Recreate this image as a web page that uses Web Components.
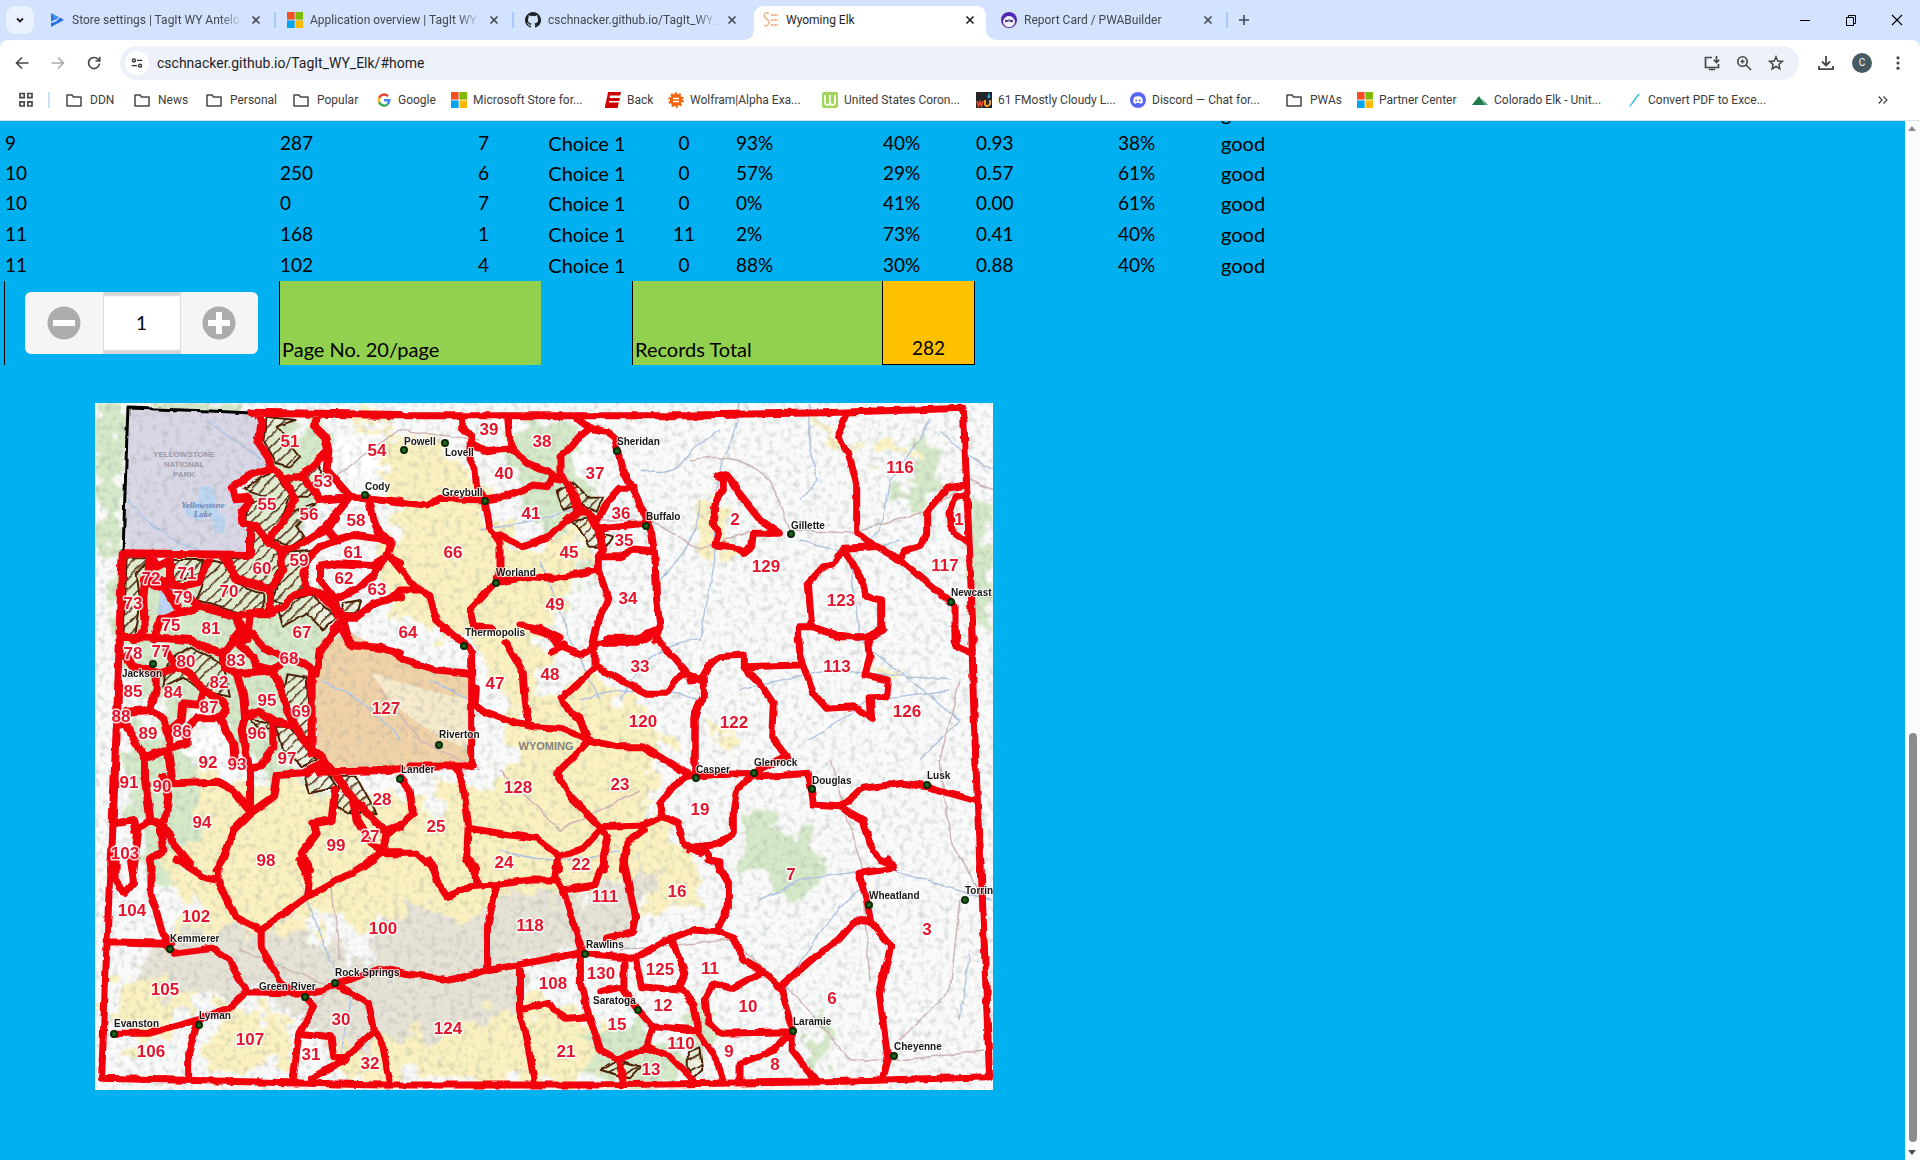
<!DOCTYPE html>
<html lang="en">
<head>
<meta charset="utf-8">
<title>Wyoming Elk</title>
<style>
  html, body { margin: 0; height: 100%; }
  body { font-family: Roboto, "Open Sans", sans-serif; font-size: 12px; color: #1f1f1f; background: #fff; overflow: hidden; }
</style>
</head>
<body>
<browser-window>
  <tab-strip slot="tabs">
    <browser-tab icon="play">Store settings | TagIt WY Antelo</browser-tab>
    <browser-tab icon="windows">Application overview | TagIt WY</browser-tab>
    <browser-tab icon="github" quiet>cschnacker.github.io/TagIt_WY_</browser-tab>
    <browser-tab icon="elk" active quiet>Wyoming Elk</browser-tab>
    <browser-tab icon="pwa">Report Card / PWABuilder</browser-tab>
  </tab-strip>
  <address-bar slot="address" value="cschnacker.github.io/TagIt_WY_Elk/#home"></address-bar>
  <bookmarks-bar slot="bookmarks">
    <bookmark-item icon="folder" style="--w:68px">DDN</bookmark-item>
    <bookmark-item icon="folder" style="--w:72px">News</bookmark-item>
    <bookmark-item icon="folder" style="--w:87px">Personal</bookmark-item>
    <bookmark-item icon="folder" style="--w:83px">Popular</bookmark-item>
    <bookmark-item icon="google" style="--w:75px">Google</bookmark-item>
    <bookmark-item icon="windows" style="--w:154px">Microsoft Store for...</bookmark-item>
    <bookmark-item icon="espn" style="--w:63px">Back</bookmark-item>
    <bookmark-item icon="wolfram" style="--w:154px">Wolfram|Alpha Exa...</bookmark-item>
    <bookmark-item icon="worldo" style="--w:154px">United States Coron...</bookmark-item>
    <bookmark-item icon="wu" style="--w:154px">61 FMostly Cloudy L...</bookmark-item>
    <bookmark-item icon="discord" style="--w:156px">Discord — Chat for...</bookmark-item>
    <bookmark-item icon="folder" style="--w:71px">PWAs</bookmark-item>
    <bookmark-item icon="windows" style="--w:115px">Partner Center</bookmark-item>
    <bookmark-item icon="peak" style="--w:154px">Colorado Elk - Unit...</bookmark-item>
    <bookmark-item icon="slash" style="--w:154px">Convert PDF to Exce...</bookmark-item>
  </bookmarks-bar>
  <elk-page>
    <draw-table></draw-table>
    <unit-map></unit-map>
  </elk-page>
</browser-window>

<script>
const ICONS = {
  play: '<path d="M2 1l4 6-4 3zM2 15l13-7-4-2.600-4 4.200L2 11z" fill="#2b6fe0"/><path d="M2 1l8 4.200-4 3.300z" fill="#3f8cf3"/>',
  windows: '<path fill="#f25022" d="M0 0h7.600v7.600H0z"/><path fill="#7fba00" d="M8.400 0H16v7.600H8.400z"/><path fill="#00a4ef" d="M0 8.400h7.600V16H0z"/><path fill="#ffb900" d="M8.400 8.400H16V16H8.400z"/>',
  github: '<path fill="#1f2328" fill-rule="evenodd" d="M8 0a8 8 0 0 0-2.530 15.590c.4.070.55-.17.55-.38v-1.490c-2.010.37-2.530-.49-2.690-.94-.09-.23-.48-.94-.82-1.130-.28-.15-.68-.52-.01-.53.63-.01 1.080.58 1.230.82.72 1.210 1.870.87 2.330.66.07-.52.28-.87.51-1.070-1.780-.2-3.640-.89-3.640-3.950 0-.87.310-1.590.82-2.150-.08-.2-.36-1.020.08-2.120 0 0 .67-.21 2.200.82a7.600 7.600 0 0 1 4 0c1.530-1.040 2.200-.82 2.200-.82.44 1.100.16 1.920.08 2.120.51.56.82 1.270.82 2.150 0 3.070-1.870 3.750-3.650 3.950.29.25.54.73.54 1.480v2.200c0 .21.150.46.55.38A8 8 0 0 0 8 0z"/>',
  elk: '<path d="M6 2C4 0 1 1 1 4s5 3 5 6-3 5-5 3" fill="none" stroke="#f4b58c" stroke-width="1.600"/><path d="M8 3h7M8 8h7M8 13h7" stroke="#f4b58c" stroke-width="2" stroke-dasharray="2.500 .6"/>',
  pwa: '<circle cx="8" cy="8" r="8" fill="#5126b5"/><path d="M2 9c1-3 3-5 6-5s5 2 6 5c0 4-3 6-6 6s-6-2-6-6z" fill="#f2effa"/><path d="M4 8l3 1-3 1M12 8l-3 1 3 1M8 7v3" stroke="#35215f" fill="none"/>',
  folder: '<path d="M1 3h5l1.500 2H15v9H1z" fill="none" stroke="#474747" stroke-width="1.500" stroke-linejoin="round"/>',
  google: '<g fill="none" stroke-width="2.400"><path d="M12 4.200A5.300 5.300 0 0 0 3.200 6" stroke="#ea4335"/><path d="M3.200 5.800a5.300 5.300 0 0 0 0 4.500" stroke="#fbbc05"/><path d="M3.100 10.200a5.300 5.300 0 0 0 8.400 2.100" stroke="#34a853"/><path d="M11.400 12.300c1.300-1.100 1.900-2.400 1.900-4H8" stroke="#4285f4"/></g>',
  espn: '<path d="M3 0h13l-.8 3.500H3.600zM2.200 6H15l-.7 3H1.500zM.8 10.500h13L12.700 16H0z" fill="#cc0000"/><path d="M3 0h2.500L3 16H0z" fill="#cc0000"/>',
  wolfram: '<circle cx="8" cy="8" r="6" fill="#f4640d" stroke="#f4640d" stroke-width="3.500" stroke-dasharray="2 1.770"/><circle cx="8" cy="8" r="6" fill="#f4640d"/><path d="M5 6.500h6M5 9.500h6" stroke="#fff" stroke-width="1.300"/>',
  worldo: '<rect width="16" height="16" rx="2" fill="#a1d45b"/><path d="M3 3v7q0 3 2.500 3T8 10V3v7q0 3 2.500 3t2.500-3V3" fill="none" stroke="#fff" stroke-width="1.700"/>',
  wu: '<path d="M0 0h16v16H0z" fill="#222529"/><path d="M1 9l1.500 5L4 10l1.500 4L7 9" fill="none" stroke="#e9442b" stroke-width="1.800"/><path d="M9 8v4q0 2 2 2t3-2V8" fill="none" stroke="#f8ac22" stroke-width="1.800"/><path d="M12.500 1q3 4 1 5t-2-1z" fill="#31a8e0"/>',
  discord: '<circle cx="8" cy="8" r="8" fill="#5865f2"/><path d="M4.500 5q3.500-1.500 7 0 1.700 3 1.300 5.500L10.500 12 10 11H6l-.5 1-2.300-1.500Q2.800 8 4.500 5z" fill="#fff"/><circle cx="6.300" cy="8.500" r="1" fill="#5865f2"/><circle cx="9.700" cy="8.500" r="1" fill="#5865f2"/>',
  peak: '<path d="M0 13L7 4l6 9z" fill="#1c7c4c"/><path d="M9 6l7 7h-3z" fill="#4ba36c"/>',
  slash: '<path d="M4 14L13 2" stroke="#3cc0d8" stroke-width="1.600"/><path d="M3 15l3-4" stroke="#8bd8ea" stroke-width="1"/>',
  chevron: '<path d="M5 6.500l3 3 3-3" fill="none" stroke="#1f1f1f" stroke-width="1.800"/>',
  close: '<path d="M4.500 4.500l7 7m0-7l-7 7" stroke="currentColor" stroke-width="1.600"/>',
  plus: '<path d="M8 3v10M3 8h10" stroke="#3c4a5e" stroke-width="1.600"/>',
  min: '<path d="M3 8.500h10" stroke="#000"/>',
  restore: '<path d="M3.500 5.500h7v8h-7zM5.500 5V3.500h7v8H11" fill="none" stroke="#000"/>',
  quit: '<path d="M3 3l10 10M13 3L3 13" stroke="#000" stroke-width="1.100"/>',
  back: '<path d="M14.500 8H3M8 2.500L2.500 8 8 13.500" fill="none" stroke="#474747" stroke-width="1.600"/>',
  forward: '<path d="M1.500 8H13M8 2.500L13.500 8 8 13.500" fill="none" stroke="#a9aaac" stroke-width="1.600"/>',
  reload: '<path d="M13.500 8.500A5.500 5.500 0 1 1 12 4.200l1.200 1.300" fill="none" stroke="#474747" stroke-width="1.700"/><path d="M13.800 1.800V6H9.500" fill="none" stroke="#474747" stroke-width="1.600"/>',
  tune: '<g fill="none" stroke="#303030" stroke-width="1.600"><circle cx="4.500" cy="5" r="1.700"/><path d="M8 5h6M2 11h6"/><circle cx="11.500" cy="11" r="1.700"/></g>',
  install: '<path d="M8 2.500H1.500v10h13V9M5 14.500h6" fill="none" stroke="#474747" stroke-width="1.700"/><path d="M12.500 1v6M9.800 4.800l2.700 2.700 2.700-2.700" fill="none" stroke="#474747" stroke-width="1.600"/>',
  zoom: '<g fill="none" stroke="#474747" stroke-width="1.600"><circle cx="6.500" cy="6.500" r="4.700"/><path d="M10 10l5 5"/></g><path d="M6.500 4.500v4M4.500 6.500h4" stroke="#474747" stroke-width="1.400"/>',
  star: '<path d="M8 1.800l1.800 4.200 4.500.4-3.400 3 1 4.500L8 11.500l-3.900 2.400 1-4.500-3.400-3 4.500-.4z" fill="none" stroke="#474747" stroke-width="1.500"/>',
  download: '<path d="M8 1v9M4 6.500L8 10.500l4-4M1 11v3.200h14V11" fill="none" stroke="#474747" stroke-width="1.800"/>',
  dots: '<g fill="#474747"><circle cx="8" cy="2.800" r="1.600"/><circle cx="8" cy="8" r="1.600"/><circle cx="8" cy="13.200" r="1.600"/></g>',
  apps: '<g fill="none" stroke="#474747" stroke-width="1.700"><path d="M2 1.500h4.200v4.200H2zM9.800 1.500H14v4.200H9.800zM2 9.800h4.200V14H2zM9.800 9.800H14V14H9.800z"/></g>',
  more: '<path d="M3 4l4 4-4 4M8.500 4l4 4-4 4" fill="none" stroke="#474747" stroke-width="1.500"/>'
};
const icon = (name, size = 16) =>
  `<svg width="${size}" height="${size}" viewBox="0 0 16 16" aria-hidden="true">${ICONS[name]}</svg>`;
const RESET = `:host,*{box-sizing:border-box} svg{display:block;flex:none}
  button{display:grid;place-items:center;border:0;padding:0;background:none;color:inherit;font:inherit}`;

class Base extends HTMLElement {
  connectedCallback() {
    if (!this.shadowRoot) this.attachShadow({ mode: 'open' }).innerHTML = `<style>${RESET}${this.css()}</style>${this.html()}`;
  }
  css() { return ''; }
  html() { return '<slot></slot>'; }
}

customElements.define('browser-window', class extends Base {
  css() { return `:host{display:flex;flex-direction:column;height:100vh;background:#d3e3fd}
    .frame{flex:none;background:#fff;border-radius:8px 8px 0 0;border-bottom:1px solid #d9e4e8}`; }
  html() { return `<slot name="tabs"></slot><div class="frame"><slot name="address"></slot><slot name="bookmarks"></slot></div><slot></slot>`; }
});

customElements.define('tab-strip', class extends Base {
  css() { return `:host{display:flex;height:40px;flex:none;align-items:stretch}
    .list{width:28px;height:28px;margin:6px 4px 6px 6px;border-radius:9px;background:#eaf1fe}
    .new{width:32px}
    .win{display:flex;margin-left:auto} .win button{width:46px}`; }
  html() { return `<button class="list" aria-label="Search tabs">${icon('chevron')}</button><slot></slot>
    <button class="new" aria-label="New tab">${icon('plus')}</button>
    <div class="win"><button aria-label="Minimize">${icon('min')}</button><button aria-label="Restore">${icon('restore')}</button><button aria-label="Close window">${icon('quit')}</button></div>`; }
});

customElements.define('browser-tab', class extends Base {
  css() { return `:host{display:flex;flex:0 1 238px;min-width:0;padding-top:6px;color:#41474f}
    .tab{position:relative;display:flex;flex:1;align-items:center;padding:0 12px 6px 11px;min-width:0}
    .tab::after{content:"";position:absolute;right:0;top:6px;width:2px;height:16px;background:#a8c7fa}
    :host([quiet]) .tab::after{display:none}
    .title{flex:1;margin-left:7px;white-space:nowrap;overflow:hidden;line-height:16px}
    :host(:not([active])) .title{-webkit-mask:linear-gradient(90deg,#000 148px,transparent 170px);mask:linear-gradient(90deg,#000 148px,transparent 170px)}
    button{width:16px;height:16px;margin-left:8px}
    :host([active]){color:#1f1f1f}
    :host([active]) .tab{background:#fff;border-radius:9px 9px 0 0;margin:0 4px 0 2px;padding:0 8px 6px 9px}
    :host([active]) .tab::before,:host([active]) .tab::after{content:"";display:block;position:absolute;bottom:0;top:auto;width:9px;height:9px;background:radial-gradient(circle at 0 0,transparent 8px,#fff 9px)}
    :host([active]) .tab::before{left:-9px;right:auto}
    :host([active]) .tab::after{right:-9px;background:radial-gradient(circle at 100% 0,transparent 8px,#fff 9px)}`; }
  html() { return `<div class="tab">${icon(this.getAttribute('icon'))}<span class="title"><slot></slot></span><button aria-label="Close tab">${icon('close')}</button></div>`; }
});

customElements.define('address-bar', class extends Base {
  css() { return `:host{display:flex;align-items:center;height:46px;padding:0 4px}
    button{width:36px;height:36px}
    .box{display:flex;flex:1;align-items:center;height:34px;margin:0 9px 0 8px;padding:0 7px 0 5px;border-radius:17px;background:#edf1fa}
    .site{width:24px;height:24px;border-radius:50%;background:#fff}
    input{flex:1;min-width:0;border:0;background:none;padding:0 0 0 8px;font:14px/20px Roboto,sans-serif;color:#1f1f1f;outline:0}
    .box button:not(.site){width:32px}
    .me span{width:20px;height:20px;border-radius:50%;background:#455a64;color:#fff;font-size:10px;line-height:20px}`; }
  html() { return `<button aria-label="Back">${icon('back')}</button><button aria-label="Forward">${icon('forward')}</button><button aria-label="Reload">${icon('reload')}</button>
    <div class="box"><button class="site" aria-label="Site information">${icon('tune', 14)}</button><input type="text" aria-label="Address" value="${this.getAttribute('value')}">
    <button aria-label="Install app">${icon('install')}</button><button aria-label="Zoom">${icon('zoom')}</button><button aria-label="Bookmark">${icon('star')}</button></div>
    <button aria-label="Downloads">${icon('download')}</button><button class="me" aria-label="Profile"><span>C</span></button><button aria-label="Menu">${icon('dots')}</button>`; }
});

customElements.define('bookmarks-bar', class extends Base {
  css() { return `:host{display:flex;align-items:center;height:34px;padding:0 30px 6px 18px}
    .sep{width:2px;height:16px;margin:0 16px 0 14px;background:#cfe0fb;flex:none}
    .more{margin-left:auto}`; }
  html() { return `<button aria-label="Apps">${icon('apps')}</button><span class="sep"></span><slot></slot><button class="more" aria-label="More bookmarks">${icon('more', 14)}</button>`; }
});

customElements.define('bookmark-item', class extends Base {
  css() { return `:host{display:block;flex:0 1 var(--w)}
    a{display:flex;align-items:center;gap:6px;color:#3c3c3c;text-decoration:none;white-space:nowrap;line-height:16px}
    :host([icon=folder]) a{gap:8px}`; }
  html() { return `<a href="#">${icon(this.getAttribute('icon'))}<span><slot></slot></span></a>`; }
});

customElements.define('elk-page', class extends Base {
  css() { return `:host{display:flex;flex:1;min-height:0;background:#00b0f0}
    .view{flex:1;min-width:0;overflow:hidden;display:flex;flex-direction:column;justify-content:flex-end;align-items:flex-start;padding-bottom:70px}
    .rail{display:flex;flex-direction:column;width:15px;background:#fcfcfc;align-items:center}
    .gap{flex:596} .thumb{flex:409;width:8px;border-radius:4px;background:#8b8b8b} .rest{flex:3}
    .rail svg{margin:3px 0}`; }
  html() { return `<div class="view"><slot></slot></div>
    <div class="rail"><svg width="9" height="9"><path d="M0 7l4-5 4 5z" fill="#8b8b8b"/></svg><div class="gap"></div><div class="thumb"></div><div class="rest"></div><svg width="9" height="9"><path d="M0 2l4 5 4-5z" fill="#505050"/></svg></div>`; }
});

customElements.define('page-stepper', class extends Base {
  css() { return `:host{display:flex;width:233px;height:62px;margin-left:20px;border-radius:6px;overflow:hidden;background:#f5f5f5}
    button{flex:1}
    input{width:78px;border:1px solid #ddd;border-width:0 1px;background:#fff;box-shadow:inset 0 6px 2px -2px #d4d4d4,inset 0 -6px 2px -2px #d4d4d4;text-align:center;font:inherit;color:#000;padding:0;outline:0}`; }
  html() {
    const disc = p => `<svg width="34" height="34" viewBox="0 0 34 34"><circle cx="17" cy="17" r="16.500" fill="#acacac"/><path d="${p}" stroke="#fff" stroke-width="6"/></svg>`;
    return `<button aria-label="Previous page">${disc('M6 17h22')}</button><input type="text" aria-label="Page number" value="1"><button aria-label="Next page">${disc('M6 17h22M17 6v22')}</button>`;
  }
});

customElements.define('draw-table', class extends Base {
  css() { return `:host{display:block;margin-left:4px;font:19px/24px Lato,sans-serif;color:#000}
    table{border-collapse:separate;border-spacing:0;table-layout:fixed;width:1336px}
    tbody td{padding:0 0 4px 1px;height:30px;vertical-align:bottom}
    tbody tr:nth-child(n+5) td{height:31px}
    td{white-space:nowrap;text-align:left}
    td:nth-child(n+3):nth-child(-n+5){text-align:center}
    tbody td:nth-child(4),tbody td:nth-child(10),.green{font-size:20px}
    tfoot td{height:84px;padding:0 2px 4px;vertical-align:bottom;text-align:left!important}
    tfoot .pager{vertical-align:middle;padding:0;border-left:1px solid #000}
    .green{background:#92d050;border-left:1px solid #000}
    .total{background:#ffc000;border:solid #000;border-width:0 1px 1px;text-align:center!important}`; }
  html() {
    const rows = ['|||||||||good', '9|287|7|Choice 1|0|93%|40%|0.93|38%|good', '10|250|6|Choice 1|0|57%|29%|0.57|61%|good', '10|0|7|Choice 1|0|0%|41%|0.00|61%|good', '11|168|1|Choice 1|11|2%|73%|0.41|40%|good', '11|102|4|Choice 1|0|88%|30%|0.88|40%|good'];
    return `<table><colgroup>${[275,146,116,91,103,147,93,142,103,120].map(w => `<col style="width:${w}px">`).join('')}</colgroup>
      <tbody>${rows.map(r => `<tr>${r.split('|').map(c => `<td>${c}</td>`).join('')}</tr>`).join('')}</tbody>
      <tfoot><tr><td class="pager"><page-stepper></page-stepper></td><td class="green" colspan="2">Page No. 20/page</td><td></td><td class="green" colspan="2">Records Total</td><td class="total">282</td></tr></tfoot></table>`;
  }
});

/* Map sheets: each holds its origin, its scale, the unit borders, the hatched
   closures, the unit numbers and the towns (label x, label y, dot x, dot y). */
const T = 1 / 3;
const SHEETS = [
 { o: [90, 400, T, T],
   line: `M485 38L930 45 M500 40L515 65 505 130 530 165 548 205 580 240 640 225 680 185 715 150 705 110 670 75 690 45
    M548 205L480 225 425 265 435 295 475 290 480 300 455 330 460 370 500 380 540 430 575 450 620 440 700 390 765 310 780 290
    M580 240L615 300 595 340 550 400 540 430 M640 225L690 300 780 290 825 295 930 305 M715 150L710 210 745 250 780 290
    M480 380V465L98 460 92 600 88 720 M835 290L850 360 870 400 905 430 890 470 930 490
    M740 360L710 385 740 420 790 405 870 415 905 430 M740 420L690 440 650 480 640 520 650 560 660 575
    M890 470L850 495 740 490 690 500 690 540 730 600 M870 490L850 530 800 570 730 600 740 640 760 650 800 650 850 610 930 590
    M575 450V490L580 510 540 570 490 550 440 540 410 480 400 470 M360 470L340 520 330 545 270 560 240 545 240 480 200 500 180 470
    M540 570V640H480L440 650 330 620 270 640 210 660 M540 640L580 620 620 580 660 570 700 590 760 650 730 690 720 720
    M440 650L455 690 430 720 M180 470L175 520 230 550 270 560 330 620 M165 540L160 600 165 690 130 720 M230 570L260 620 M165 540L210 560 M210 660L190 720 M480 640L470 720 M760 650L780 720`,
   hatch: `M530 50L620 60 560 80 630 170 600 200 560 190 520 120z M460 265L550 215 600 290 560 400 540 425 500 375 470 370 470 320 530 290z
    M590 250L680 190 700 230 650 290 610 290z M600 340L680 310 620 380 640 410 600 440 550 420z M490 385L570 440 570 500 540 560 440 530 410 480 480 470z
    M240 480H340L330 520 250 545z M355 480L410 490 440 550 520 580 520 630 450 640 320 600 340 550z M575 460L690 450 650 480 640 560 580 610 545 600 580 520z
    M560 620L660 580 740 650 700 690 650 640 580 680z M110 475H180L140 520 150 600 130 720H100z M750 640L760 610 810 600 800 640z`,
   num: '51,600,127 54,860,152 53,700,247 55,532,314 56,657,346 58,797,362 61,790,458 62,763,538 63,860,569 59,627,484 60,515,506 70,416,577 71,292,522 72,184,536 79,280,595 73,129,613 75,242,677 81,363,687 67,637,699',
   town: 'Cody,825,262,824,285' },
 { o: [390, 400, T, T],
   line: `M0 47H930 M215 50V80L245 110 240 180 255 210 260 260 285 300 M245 130L290 155 370 145 355 110 350 55 M370 145L410 190 470 215 510 240
    M285 300L350 290 430 255 475 260 490 230 M560 55L600 85 575 105 540 145 510 170 510 220 545 270 565 320 610 350 620 380 640 450
    M600 85L655 95 675 120 695 200 735 280 765 345 785 400 795 470 800 600 810 680 795 720 M0 305L50 312 110 318 150 295 285 300
    M285 300L300 390 330 430V510L318 548 240 630 250 680 310 685 M330 405L400 440 480 410 530 360 570 330 M540 265L560 330 600 340 M615 375L650 310 690 265H735
    M620 385L765 370 M640 450L625 470 690 470 730 450 790 455 M600 345L630 400 640 450 M625 470V510L540 525 490 535 420 530 318 548 M625 510L655 600 625 660 610 720
    M0 470L60 545 120 590 140 660 200 715 M0 600L30 570H95 M390 675L450 685 510 715 M650 715H740L800 690`,
   hatch: 'M500 275L550 250 590 290 640 290 620 335 570 310 520 330z M540 360L610 350 640 400 670 410 650 440 600 440 570 390z',
   num: '39,296,89 38,457,125 40,343,223 37,616,223 41,422,341 36,692,341 35,702,422 66,188,458 45,537,458 49,496,614 34,714,597 64,55,699',
   town: 'Powell,42,125,41,149;Lovell,165,160,165,129;Sheridan,680,125,680,152;Greybull,155,278,284,304;Buffalo,768,350,768,378;Worland,318,520,318,548;Thermopolis,226,700,223,738' },
 { o: [690, 400, T, T],
   line: `M0 45L400 38 820 25 830 260 850 720 M470 45L440 110 475 160 500 250V395L550 435 630 480 720 555 780 605 795 620V720
    M80 225H110L150 285 210 360 265 400H190L185 440 160 460 130 440 75 435 85 400 70 370 75 310 100 270V235z
    M825 255L770 265 710 340V400L690 440 640 455 630 480 M825 285L795 290 780 340 785 390 825 420
    M550 440L460 445 430 495 400 500 355 550 365 680H325V720 M460 445L510 530 530 590 575 600V690L530 710H450L365 680`,
   hatch: '',
   num: '2,136,360 116,630,203 129,229,502 123,452,602 117,765,499 1,807,360',
   town: 'Gillette,302,377,302,401;Newcast,783,578,783,605' },
 { o: [90, 630, T, T],
   line: `M90 20L80 300 65 640 60 720 M90 20L230 25 300 30 360 60 400 70 435 30 470 0 M470 0L450 50 490 80 500 110 550 125 M400 70L405 110 440 130 550 120 570 110
    M480 5L520 50 580 80 640 100 680 130 M760 0L780 45 880 55 930 70 M680 130L690 60 740 0 M665 130V370 M690 425L890 420 930 415
    M550 130L575 180 590 240 640 330 700 390 740 440 800 520 890 605 930 590 M440 130L460 200 465 260 455 300 470 380 480 430V550
    M465 260L510 245 550 270 595 285 M550 290V350L510 410 480 415 M230 60L250 100 300 130 340 180 400 215 410 240 390 265 320 265 290 300V340L230 360 165 385 120 310 110 280 85 285
    M110 80L130 110 210 130 250 115 M110 245L180 240 M200 130V180L180 235 220 270 240 340 M340 190L330 225 280 220 275 270 240 300
    M390 270L430 340 435 400 M165 385V450L180 560 M235 370L245 440 250 460 380 455 430 480 480 545 M220 440L235 500 225 570
    M75 580L130 570 135 600 180 570 225 590 250 640 300 700 M145 600L130 720 M210 600L220 660 180 690 185 720 M480 550L430 600 400 690 380 720
    M480 550L550 500 560 435 640 430 700 400 M735 480L725 570 670 580 680 610 635 670 660 720 M790 520L800 570 840 640 890 670H930 M890 605L880 660 830 700`,
   hatch: `M230 100L300 50 400 100 420 200 330 180 280 140 220 170z M590 130L650 140 660 330 620 300 580 180z M480 265L550 280 560 300 500 290z
    M560 290H600L680 390 640 410 580 360z M640 430L700 410 740 470 660 490z M750 440H800L860 550 770 550 740 520z`,
   num: '78,128,73 77,212,65 80,287,97 83,438,92 68,597,88 85,128,187 84,249,190 82,388,160 87,358,235 95,530,213 69,634,247 127,887,236 88,93,262 89,173,312 86,275,307 96,501,312 97,590,387 92,353,398 93,440,406 91,118,460 90,217,472 28,877,510 94,335,580 27,840,622 99,738,649 98,527,694 103,104,671',
   town: 'Jackson,97,132,190,103' },
 { o: [390, 630, T, T],
   line: `M160 0L225 40 245 70V410 M60 408H250 M0 60L40 90 140 120 240 130 M245 170L262 180 258 225 290 250 380 280 430 290 510 295 595 330 M345 35L400 130 405 210 415 270
    M430 0L490 20 510 50 570 75 600 60 615 0 M490 65L520 45 M610 40H740L790 10 890 130 860 150 830 190H770L720 165 620 110 560 165 515 205 530 240 570 265 595 330 M615 40V110
    M595 330L680 350H760L800 375 890 430 M595 330L550 380 500 430 540 500 630 590 760 585 820 560 810 520 850 470 890 440 920 430
    M890 130L930 150 M930 220L915 270V430 M200 415L220 470 235 580 230 680 260 720 M240 595L360 615 440 625 510 680 580 655 630 600
    M30 445L60 480 70 550 0 610 M0 670H80L130 715 M505 680V720 M630 590L655 620 640 680V720 M760 600L710 640 700 720 M820 560L865 580 880 640 930 670`,
   hatch: '',
   num: '47,316,163 48,481,136 33,749,110 120,760,276 128,383,473 23,690,465 25,138,591 24,343,698 22,572,705',
   town: 'Riverton,148,316,147,344;Lander,32,420,30,446' },
 { o: [690, 630, T, T],
   line: `M845 0L850 200 870 720 M795 0L800 50 845 70 M325 0L330 80 370 190 410 235 490 230 545 265 540 200 590 200 595 150 525 135 540 80 535 20
    M390 0L440 15 530 25 580 0 M165 110L330 105 M0 150L35 145 55 110 90 80 160 75V110L210 160 250 220 245 320 290 380 190 430
    M40 145V200L15 250V440 M0 440L60 435 190 430 220 440 355 430 365 480 370 525 450 530 520 570 540 640 570 690 610 705
    M450 530L520 475 640 460 710 470 850 510 M185 435L140 480 130 540V610L90 640 40 645 0 660 M40 650L60 690 90 695V720`,
   hatch: '',
   num: '113,442,110 122,131,280 126,650,245 19,30,540',
   town: 'Casper,18,420,17,444;Glenrock,193,400,192,429;Douglas,366,452,365,477;Lusk,712,437,712,465' },
 { o: [90, 860, 910 / 1568, T],
   line: `M35 0L20 655 500 675H850L1270 665 1550 650 1535 0 M35 245L130 250 145 280 210 265 240 300 270 395 370 400 400 390 425 370 470 345 500 325 560 345 620 360 690 330 750 310 840 280 920 290 940 300
    M270 395L240 445 180 480 100 520H40 M185 490L170 580V660 M70 0L75 70 60 100 45 60V0 M105 0V100L125 220 140 250 M150 0L200 55 220 60 M225 0L220 60 250 170 295 210
    M360 0L378 60 375 110 295 210V260L330 370 350 395 M490 0L375 110 M585 0L600 70 615 110 655 80 695 75 M650 0L670 70 M695 75L760 60 800 60 805 0
    M700 80L685 200V320 M805 60L815 90 870 75 885 0 M815 90L835 200 850 280 M920 0L930 90 940 170 935 215 890 235
    M940 295L990 245 1040 210 1080 215 1110 235 1125 300 1160 335 1190 380 1210 500 M1065 0L1080 10 1100 70V140L1080 215
    M1190 380L1250 290 1290 240 1320 180 1345 185 1340 135 1325 40 1385 25 1375 0 M1345 185L1380 260 1360 400 1375 600 1365 660
    M1005 250L1025 340 1015 390 950 380 940 300 M1160 335L1105 385 1075 370 1060 420 1065 490 1090 520 1205 515
    M1020 390L1040 430 1050 520 1080 600 1090 660 M845 285V370L860 470 M920 300V380L880 395 M920 390L945 450 970 500 1050 510
    M740 320V450L755 560 765 660 M740 450L790 430 820 475 860 470 880 570 910 600 920 660 M910 600L960 560 970 500 M960 560L1000 590 1040 660
    M1210 510V570L1250 660 M1205 520L1180 570 1120 610V660 M370 410L385 440 360 520 350 660 M425 375L480 430 490 510 440 590 420 590 415 530 360 520
    M490 510L505 560 515 660 M440 600L380 655`,
   hatch: 'M880 630L910 600 950 620 930 655 900 640z M1030 580L1050 565 1055 630 1040 655 1030 620z',
   num: '104,72,153 102,183,171 100,504,207 118,759,199 111,887,112 16,1012,95 3,1442,210 105,130,391 106,105,575 107,275,540 30,433,480 31,381,585 32,483,611 124,617,508 108,798,372 130,880,341 125,982,329 11,1068,327 12,987,437 10,1134,440 6,1279,417 15,908,495 21,820,576 110,1018,552 13,967,630 9,1101,577 8,1181,614 7,1208,45',
   town: 'Kemmerer,138,238,138,266;Lyman,187,467,187,496;Evanston,42,493,42,522;Green River,291,381,370,410;Rock Springs,423,340,423,370;Rawlins,855,255,853,283;Saratoga,867,423,944,450;Laramie,1212,485,1212,512;Cheyenne,1385,562,1385,589;Wheatland,1342,107,1342,136;Torrin,1508,94,1508,119' }
];

customElements.define('unit-map', class extends Base {
  css() { return `:host{display:block;width:898px;max-width:calc(100% - 95px);margin:38px 0 0 95px}
    svg{width:100%;height:auto;background:#f9faf9}
    .line path,.hatch path{vector-effect:non-scaling-stroke;stroke-linejoin:round;stroke-linecap:round}
    .line path{fill:none;stroke:#f2000c;stroke-width:7px}
    .line .dense path{stroke-width:8px}
    .hatch path{fill:url(#hatch);stroke:#4d2106;stroke-width:2px}
    .line .heavy{stroke:#000;stroke-width:3px}
    text{paint-order:stroke;stroke-linejoin:round}
    .num{font:bold 17px "Liberation Sans",sans-serif;fill:#e2162c;stroke:#fff;stroke-width:3px;stroke-opacity:.85;text-anchor:middle}
    .town{font:bold 10px "Liberation Sans",sans-serif;fill:#161616;stroke:#fff;stroke-width:2px;stroke-opacity:.8}
    .faint{font:bold 8px "Liberation Sans",sans-serif;fill:#9a9aa6;text-anchor:middle}
    .wide{font-size:11px;fill:#85857c}
    .lake{font:italic bold 9px "Liberation Serif",serif;fill:#6d86b8;text-anchor:middle}
    .dot{fill:#1d6b1d;stroke:#0a2a0a;stroke-width:2}
    .yellow{fill:#fbf1c0} .forest{fill:#d5e8c8} .grey{fill:#e6e2d6} .river{fill:none;stroke:#b4c8e6;stroke-width:1.500} .road{fill:none;stroke:#d3b7b9;stroke-width:1.500}`; }
  html() {
    const at = (s, x, y) => [Math.round(s.o[0] + x * s.o[2]), Math.round(s.o[1] + y * s.o[3])];
    const group = key => SHEETS.map(s => `<g class="${s.o[0] === 90 && s.o[1] < 860 ? 'dense' : ''}" transform="translate(${s.o[0]} ${s.o[1]}) scale(${s.o[2]} ${s.o[3]})"><path d="${s[key]}"/></g>`).join('');
    const nums = SHEETS.map(s => s.num.split(' ').map(n => { const [t, x, y] = n.split(','); const p = at(s, +x, +y); return `<text class="num" x="${p[0]}" y="${p[1] + 5}">${t}</text>`; }).join('')).join('');
    const towns = SHEETS.map(s => s.town.split(';').map(n => { const [t, x, y, dx, dy] = n.split(','); const p = at(s, +x, +y), d = at(s, +dx, +dy);
      return `<circle class="dot" cx="${d[0]}" cy="${d[1]}" r="3"/><text class="town" x="${p[0]}" y="${p[1] + 3}">${t}</text>`; }).join('')).join('');
    const whole = 'x="95" y="403" width="898" height="687" filterUnits="userSpaceOnUse" color-interpolation-filters="sRGB"';
    return `<svg viewBox="95 403 898 687" role="img" aria-label="Wyoming elk hunt units">
    <defs>
      <pattern id="hatch" width="8" height="8" patternUnits="userSpaceOnUse" patternTransform="scale(3) rotate(45)"><rect width="8" height="8" fill="#e9ecd2" fill-opacity=".6"/><rect width="1.500" height="8" fill="#4a2c14"/></pattern>
      <filter id="rough" ${whole}><feTurbulence type="fractalNoise" baseFrequency=".07" numOctaves="2" seed="4"/><feDisplacementMap in="SourceGraphic" scale="5" xChannelSelector="R" yChannelSelector="G"/></filter>
      <filter id="wild" ${whole}><feTurbulence type="fractalNoise" baseFrequency=".04" numOctaves="5" seed="8"/><feDisplacementMap in="SourceGraphic" scale="60" xChannelSelector="R" yChannelSelector="G"/><feGaussianBlur stdDeviation="1"/></filter>
      <filter id="grain" ${whole}><feTurbulence type="fractalNoise" baseFrequency=".16" numOctaves="3" seed="3"/><feColorMatrix values="0 0 0 0 .55  0 0 0 0 .6  0 0 0 0 .58  1.600 0 0 0 -.75"/></filter>
    </defs>
    <g filter="url(#wild)">
      <path class="yellow" d="M355 420L420 440 470 470 520 550 590 520 560 600 530 690 600 680 680 740 640 790 700 860 590 890 540 950 480 890 330 920 240 960 130 1060 110 1000 200 900 140 860 200 770 300 790 420 800 500 780 520 720 470 640 400 620 380 560 400 520z"/>
      <path class="yellow" d="M340 840L560 860 480 940 330 920z M330 1020L500 990 640 1040 620 1080 340 1080z M220 1000L290 1020 280 1070 200 1060z M640 840L690 840 700 900 650 920z M720 540H750L740 570z M870 440L940 450 880 460z M700 500L725 510 720 560 690 560z M800 420L850 430 840 450z M715 720L735 730 725 750z M870 670L910 660 900 680z"/>
      <path class="grey" d="M290 925L360 960 400 900 480 920 500 890 580 900 650 870 640 930 540 960 500 1010 450 1030 330 1050 280 1000 180 990 130 980 160 940 230 930z"/>
      <path class="forest" d="M95 403H240L260 430 120 450 120 560 95 560z M255 420L330 430 300 560 330 640 280 760 330 800 250 770 230 720 160 720 120 640 125 560 240 550z M130 730L190 740 200 830 150 880 130 820z M515 430L570 420 600 500 560 540 520 500z M575 550L600 560 590 600z M915 445L935 445 940 500 905 505 900 480z M970 495L993 500V640L965 600z M740 815L790 830 830 870 800 900 740 860z M590 1040L660 1030 700 1080 600 1085z M690 1000L720 1010 710 1060 690 1050z M815 1010L835 1020 830 1070 810 1060z"/>
      <path fill="#fff" d="M330 440L380 430 400 470 350 480z M575 445L610 450 615 490 580 480z M210 720L245 760 220 780 180 760z"/>
    </g>
    <path fill="#f0d2a8" d="M320 648L350 632 400 660 470 675V767L318 770 315 680z"/>
    <path fill="#f6e9cc" d="M370 672Q420 690 470 700V750Q430 735 395 705z"/>
    <path fill="#d9d6e6" d="M128 408L252 413 262 422 258 443 272 463 250 475 232 488 235 498 247 500 243 523 250 527 248 553 123 552z"/>
    <path fill="#bcd6f3" d="M200 488q10-6 14 4l4 20 8 6-2 16-8-2-6-16-12 4-12-4-2-10 14-4z M160 585l10-6 8 20-8 20-12-4z"/>
    <g class="river" filter="url(#rough)"><path d="M205 420Q235 440 262 460M128 500Q160 540 200 550M740 403Q735 440 722 460 710 520 715 560L700 640Q650 640 620 700M810 403V450L818 480 800 500M930 420Q915 450 890 480L880 530 850 560 860 640 960 720 920 760M800 540Q850 560 900 540M740 690L830 670 950 680M810 740L870 700 950 690M300 880L330 960 350 1000 340 1060M480 530Q550 520 600 500M540 560L570 640 600 700M430 680L470 700M320 680Q370 700 400 740M860 890Q820 920 780 1000M760 900L800 880 870 870M500 850Q560 870 620 850M580 700Q640 680 700 700M890 870L990 900M970 950L960 1020M940 430L960 450 993 470M640 470Q680 480 690 450L720 430M660 580Q700 540 700 500"/></g>
    <g class="road" filter="url(#rough)"><path d="M330 480L400 430 480 440M690 460Q740 450 770 480L790 530 850 533 930 510 970 480 993 490M600 520L650 520 700 550 750 530M300 1020L340 980M330 870L340 960M620 950L730 940 800 1000 850 1060 900 1060 993 1050M830 760L860 860 870 980M960 680L940 760 950 840 985 900M960 900L950 990 900 1040M380 690L420 740 480 770M240 950L340 990M500 770L560 830 640 790"/></g>
    <rect x="95" y="403" width="898" height="687" filter="url(#grain)" opacity=".5"/>
    <text class="faint" x="184" y="457">YELLOWSTONE</text><text class="faint" x="184" y="467">NATIONAL</text><text class="faint" x="184" y="477">PARK</text>
    <text class="lake" x="203" y="508">Yellowstone</text><text class="lake" x="203" y="517">Lake</text>
    <text class="faint wide" x="546" y="750">WYOMING</text>
    <g filter="url(#rough)"><g class="hatch">${group('hatch')}</g>
    <g class="line"><path class="heavy" d="M252 413L210 411 128 408 127 433 123 552"/>${group('line')}</g></g>
    ${nums}${towns}
    </svg>`;
  }
});
</script>
</body>
</html>
